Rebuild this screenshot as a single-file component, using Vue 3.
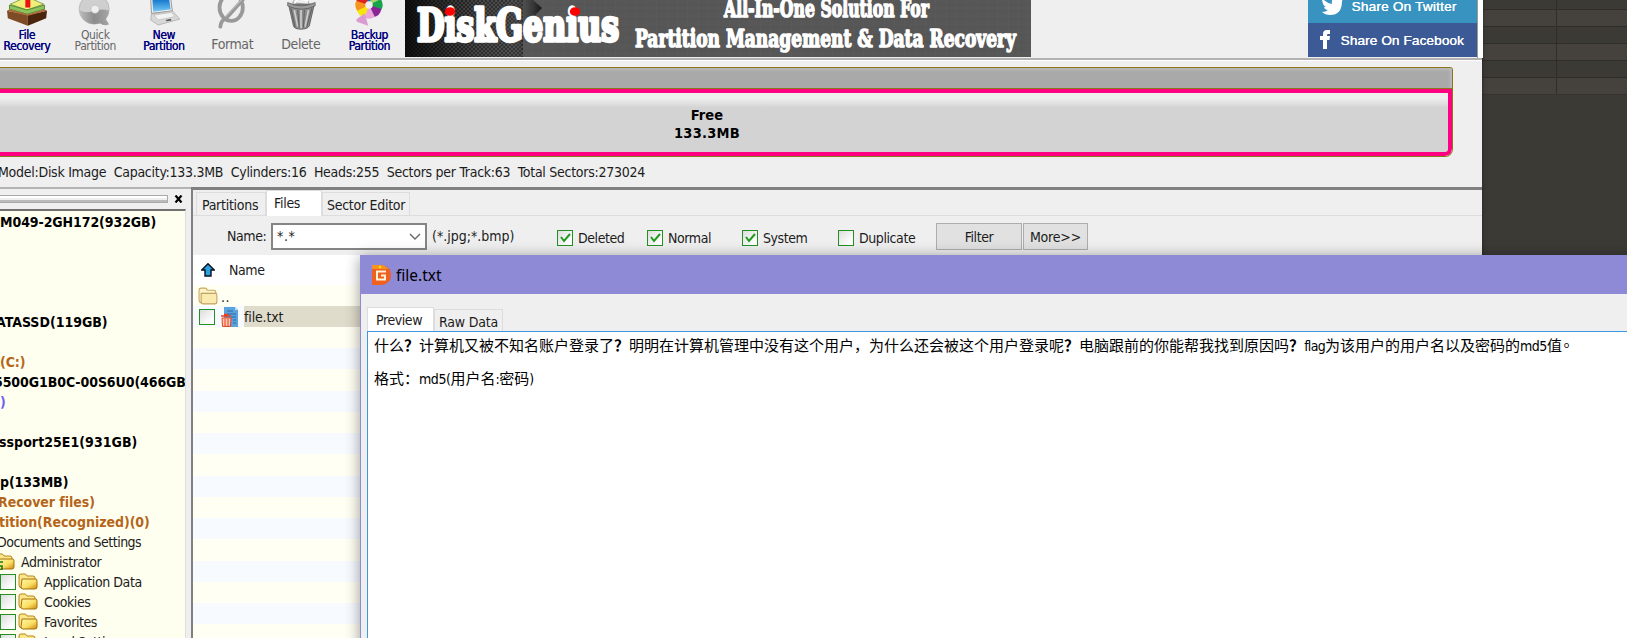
<script setup>
const tools = [
  { id: 'file', lines: ['File', 'Recovery'], on: true },
  { id: 'quick', lines: ['Quick', 'Partition'] },
  { id: 'new', lines: ['New', 'Partition'], on: true },
  { id: 'format', lines: ['Format'] },
  { id: 'delete', lines: ['Delete'] },
  { id: 'backup', lines: ['Backup', 'Partition'], on: true },
]
const tree = [
  { t: 'M049-2GH172(932GB)', k: 'b disk1' }, {}, {}, {}, {},
  { t: 'ATASSD(119GB)', k: 'b disk2' }, {},
  { t: '(C:)', k: 'b orange' },
  { t: '5500G1B0C-00S6U0(466GB', k: 'b disk3' },
  { t: ')', k: 'b blue' }, {},
  { t: 'ssport25E1(931GB)', k: 'b disk4' }, {},
  { t: 'p(133MB)', k: 'b' },
  { t: 'Recover files)', k: 'b orange rec' },
  { t: 'tition(Recognized)(0)', k: 'b orange recog' },
  { t: 'Documents and Settings', k: 'docs' },
  { t: 'Administrator', k: 'admin', folder: true },
  { t: 'Application Data', k: 'leaf', folder: true, box: true },
  { t: 'Cookies', k: 'leaf', folder: true, box: true },
  { t: 'Favorites', k: 'leaf', folder: true, box: true },
  { t: 'Local Settings', k: 'leaf', folder: true, box: true },
]
const checks = [
  { t: 'Deleted', on: true }, { t: 'Normal', on: true },
  { t: 'System', on: true }, { t: 'Duplicate', on: false },
]
const petals = ['#1674c9', '#a7d36b', '#17a34b', '#8b2496', '#e8a6dc', '#f6e60b', '#f7941d', '#d22']
</script>

<template>
  <div class="screen">
    <svg width="0" height="0" class="defs">
      <defs>
        <linearGradient id="gold" x1="0" y1="0" x2="1" y2="1"><stop offset="0" stop-color="#fff6a8" /><stop offset=".55" stop-color="#fbe064" /><stop offset="1" stop-color="#c8860c" /></linearGradient>
        <linearGradient id="lcd" x1="0" y1="0" x2="0" y2="1"><stop offset="0" stop-color="#0a6fc8" /><stop offset="1" stop-color="#74c8f5" /></linearGradient>
        <linearGradient id="disc" x1="0" y1="0" x2="1" y2="0"><stop offset="0" stop-color="#bdbdbd" /><stop offset=".5" stop-color="#8c8c8c" /><stop offset="1" stop-color="#a5a5a5" /></linearGradient>
        <pattern id="mesh" width="4" height="4" patternUnits="userSpaceOnUse"><rect width="4" height="4" fill="#4a4a4a" /><path d="M0 0h2v2H0zM2 2h2v2H2z" fill="#2a2a2a" /></pattern>
        <pattern id="linen" width="31" height="23" patternUnits="userSpaceOnUse"><rect width="31" height="23" fill="#575757" /><path d="M3.5 0v23M14.5 0v23M24.5 0v23" stroke="#5a5a5a" /><path d="M0 4.5h31M0 11.5h31M0 19.5h31" stroke="#545454" /></pattern>
        <linearGradient id="shade"><stop offset="0" stop-color="#000" stop-opacity=".8" /><stop offset=".4" stop-color="#000" stop-opacity=".2" /><stop offset=".75" stop-color="#777" stop-opacity=".1" /><stop offset="1" stop-color="#000" stop-opacity=".75" /></linearGradient>
      </defs>
    </svg>

    <main class="app">
      <header class="toolbar">
        <div class="tools">
          <div v-for="t in tools" :key="t.id" class="tool" :class="[{ on: t.on, one: t.lines.length === 1 }]">
            <svg class="ticon" width="50" height="36" viewBox="0 0 50 36">
              <g v-if="t.id === 'file'">
                <path d="M5 5l20-9 20 9-20 7z" fill="#f0ee78" stroke="#6d9d35" />
                <path d="M4 6v5l21 6 21-6V6l-21 6z" fill="#8cc35b" stroke="#4d7c2c" />
                <path d="M1 13l25 5v13L2 22z" fill="#7d4b25" /><path d="M26 18l23-5-1 9-22 9z" fill="#4a240c" />
                <path d="M1 13l3-2 22 6 20-6 3 2-23 6z" fill="#a96c38" /><path d="M23-1h6v10h-6z" fill="#e11" />
              </g>
              <g v-else-if="t.id === 'quick'">
                <circle cx="24" cy="11" r="18" fill="#cfcfcf" stroke="#b5b5b5" /><path d="M6 12q9 5 19 1 9-3 17 0-1 6-4 10l4 6q-6 3-11-1-21 4-25-16z" fill="url(#disc)" /><circle cx="25" cy="11" r="5" fill="#efefef" stroke="#bbb" />
              </g>
              <g v-else-if="t.id === 'new'">
                <path d="M9-2h24l2 15-25 3z" fill="#eee" stroke="#888" /><path d="M11-2h20l2 13-21 3z" fill="url(#lcd)" />
                <path d="M10 17l25-4 9 10-26 7-9-6z" fill="#d8d8d8" stroke="#999" stroke-width=".7" /><path d="M13 18l21-3 4 5-20 4z" fill="#f3f3f3" stroke="#aaa" stroke-width=".6" /><path d="M27 24l6-1.500 1 2-6 1z" fill="#555" />
              </g>
              <g v-else-if="t.id === 'format'" fill="none" stroke="#999" stroke-linecap="round">
                <ellipse cx="24" cy="9" rx="14" ry="16" stroke-width="4.5" /><path d="M42-5L17 23q-5 1-6 9" stroke-width="4.5" /><path d="M39-3L17 20" stroke="#bbb" stroke-width="1.5" />
              </g>
              <g v-else-if="t.id === 'delete'">
                <path d="M15 3l5-8 13 4 2 7z" fill="#eee" stroke="#999" /><path d="M10 5h31l-6 26q-2 4-10 4t-9-4z" fill="#8c8c8c" stroke="#555" />
                <path d="M17 12l4 20M25 12v22M34 12l-4 20" stroke="#ccc" stroke-width="2" fill="none" /><path d="M13 10l5 23M21 12l2 21M29 12l-1 21M38 10l-6 22" stroke="#555" fill="none" />
                <path d="M9 3q16 8 33 0v4q-16 8-33 0z" fill="#999" stroke="#555" stroke-width=".8" /><path d="M17 4l5-6 12 3" stroke="#fff" stroke-width="2" fill="none" />
              </g>
              <g v-else>
                <path v-for="(c, i) in petals" :key="c" d="M24 2L17-12q7-5 14 0z" :fill="c" :transform="`translate(1 4) rotate(${i * 45} 24 2)`" />
                <circle cx="25" cy="6" r="4.5" fill="#efefef" /><path d="M20 16l-10 7q-1 3 3 4l11 4z" fill="#d99bd1" />
              </g>
            </svg>
            <span v-for="l in t.lines" :key="l" class="tl">{{ l }}</span>
          </div>
        </div>
        <svg class="banner" width="626" height="57" viewBox="0 0 626 57">
          <rect width="626" height="57" fill="url(#linen)" />
          <path d="M0 0h118v57H0z" fill="url(#mesh)" /><path d="M0 0h128l9 8-24 25 5 24H0z" fill="url(#shade)" />
          <g class="slogan">
            <text class="brand" x="12" y="41" textLength="202" lengthAdjust="spacingAndGlyphs">DiskGenius</text>
            <text class="line" x="319" y="17" textLength="205" lengthAdjust="spacingAndGlyphs">All-In-One Solution For</text>
            <text class="line" x="230" y="46.500" textLength="381" lengthAdjust="spacingAndGlyphs">Partition Management &amp; Data Recovery</text>
          </g>
          <ellipse cx="45" cy="11.5" rx="5.2" ry="4.3" fill="#f00" /><ellipse cx="170" cy="11.5" rx="5.2" ry="4.3" fill="#f00" />
        </svg>
        <div class="share">
          <div class="tw"><svg width="22" height="24" viewBox="0 0 22 24"><path d="M1-2q4 5 10 6Q10-3 16-4q3 0 4 2l3-1-2 4q0 14-12 14-5 0-8-3 4 0 6-2-3 0-4-3h2Q1 5 1-2z" fill="#fff" /></svg><span>Share On Twitter</span></div>
          <div class="fb"><svg width="12" height="20" viewBox="0 0 12 20"><path d="M3 19v-9H0V6h3V4q0-4 4-4h3v4H8Q7 4 7 5v1h3l-.5 4H7v9z" fill="#fff" /></svg><span>Share On Facebook</span></div>
        </div>
      </header>

      <section class="disk">
        <div class="bar">
          <div class="strip"></div>
          <div class="free"><b>Free</b><b class="size">133.3MB</b></div>
        </div>
        <p class="info">Model:Disk Image&nbsp; Capacity:133.3MB&nbsp; Cylinders:16&nbsp; Heads:255&nbsp; Sectors per Track:63&nbsp; Total Sectors:273024</p>
      </section>

      <section class="body">
        <aside class="side">
          <div class="grip"><i></i><svg width="10" height="8" viewBox="0 0 10 8"><path d="M1.5.5l6 7M7.5.5l-6 7" stroke="#000" stroke-width="2.2" /></svg></div>
          <div class="tree">
            <div v-for="(r, i) in tree" :key="i" class="node" :class="r.k">
              <i v-if="r.box" class="box"></i>
              <svg v-if="r.folder" class="folder" width="20" height="17" viewBox="0 0 20 17"><path d="M1 3q0-2 2-2h4q1 0 2 2h6q2 0 2 2v10H4q-3 0-3-3z" fill="#fbe88a" stroke="#b98216" /><path d="M4 6h14q1 0 1 2v6q0 2-2 2H5q-2 0-2-2z" fill="url(#gold)" stroke="#a87010" /><path v-if="!r.box" d="M4 9h4M5 13h2v4H5" fill="none" stroke="#1d7a1d" stroke-width="1.6" /></svg>
              <span>{{ r.t }}</span>
            </div>
          </div>
        </aside>

        <section class="pane">
          <nav class="tabs"><span class="t1">Partitions</span><span class="t2 cur">Files</span><span class="t3">Sector Editor</span></nav>
          <div class="filter">
            <label>Name:</label>
            <div class="combo"><span>*.*</span><svg width="12" height="8" viewBox="0 0 12 8"><path d="M1 1l5 5 5-5" fill="none" stroke="#666" stroke-width="1.4" /></svg></div>
            <span class="hint">(*.jpg;*.bmp)</span>
            <div class="checks">
              <span v-for="c in checks" :key="c.t" class="check" :class="c.t"><i class="box"><svg v-if="c.on" width="12" height="12" viewBox="0 0 12 12"><path d="M2 5l3 4 6-7" fill="none" stroke="#1d9a1d" stroke-width="2" /></svg></i>{{ c.t }}</span>
            </div>
            <button class="go">Filter</button><button class="more">More&gt;&gt;</button>
          </div>
          <div class="list">
            <div class="head"><svg width="14" height="14" viewBox="0 0 14 14"><path d="M7 .7L13.3 7H10v6H4V7H.7z" fill="#2b9fe0" stroke="#08121c" stroke-width="1.4" /></svg><span>Name</span></div>
            <div class="row up"><svg class="folder" width="21" height="18" viewBox="0 0 20 17"><path d="M1 3q0-2 2-2h4q1 0 2 2h6q2 0 2 2v10H4q-3 0-3-3z" fill="#fdf2c8" stroke="#c8a860" /><path d="M3 6h14q1 0 1 2v6q0 2-2 2H5q-2 0-2-2z" fill="#fbeab0" stroke="#bfa262" /></svg><span>..</span></div>
            <div class="row file"><i class="box"></i>
              <svg width="18" height="20" viewBox="0 0 18 20"><path d="M3 0h11l3 3v17H3z" fill="#5ba2da" /><path d="M14 0v3h3z" fill="#b9dcf5" /><path d="M6 4h6M6 7h9M10 10h5M12 13h3M12 16h3" stroke="#2a6dab" /><path d="M0 9h10M3 7.5h4" stroke="#e8401c" stroke-width="1.5" /><path d="M1 11h9l-.5 8.4h-8z" fill="#ffc9b8" stroke="#e8401c" /><path d="M4 12v7M7 12v7" stroke="#e8401c" /></svg>
              <span class="sel">file.txt</span></div>
            <div class="stripes"></div>
          </div>
        </section>
      </section>
    </main>

    <section class="dialog">
      <header class="title">
        <svg width="19" height="20" viewBox="0 0 19 20"><path d="M0 0h10q9 2 9 10t-9 10H0z" fill="#f0601e" /><path d="M0 0h10q4 1 6 4H0z" fill="#f7931e" /><path d="M14 6.5H5v8h8v-4H9" fill="none" stroke="#fff3d8" stroke-width="2" /><circle cx="8" cy="2" r="1.2" fill="#ffe600" /></svg>
        <span>file.txt</span>
      </header>
      <nav class="dtabs"><span class="cur">Preview</span><span class="raw">Raw Data</span></nav>
      <article class="text">
        <p>什么<b>？</b>计算机又被不知名账户登录了<b>？</b>明明在计算机管理中没有这个用户，为什么还会被这个用户登录呢<b>？</b>电脑跟前的你能帮我找到原因吗<b>？</b><span class="lat flag">flag</span>为该用户的用户名以及密码的<span class="lat md">md5</span>值<span class="stop">。</span></p>
        <p>格式：<span class="lat md">md5(</span>用户名<span class="lat">:</span>密码<span class="lat">)</span></p>
      </article>
    </section>
  </div>
</template>

<style>
html, body { margin: 0; overflow: hidden; }
</style>

<style scoped>
* { box-sizing: border-box; }
p { margin: 0; }
.screen { position: relative; width: 1627px; height: 638px; overflow: hidden; color: #1c1c1c; font: 14px "DejaVu Sans Condensed", "DejaVu Sans", sans-serif; font-stretch: condensed; letter-spacing: -.42px; white-space: nowrap;
  background: linear-gradient(90deg, transparent 1556px, #2f2d2a 1556px 1557px, transparent 1557px) 0 0 / 100% 94px no-repeat, repeating-linear-gradient(#3c3a35 0 9px, #2f2d2a 9px 10px, #45413c 10px 26px, #2f2d2a 26px 27px, #3c3a35 27px 34px) 0 0 / 100% 94.5px no-repeat, #3c3a35; }
.defs { position: absolute; }
.app { width: 1482px; height: 638px; background: #efefef; display: flex; flex-direction: column; box-shadow: 0 0 4px #222; }

.toolbar { height: 61px; flex: none; display: flex; border-bottom: 1px solid #fff; box-shadow: inset 0 -2px #b2b2b2; }
.tools { display: flex; width: 404px; margin-left: -7.5px; }
.tool { width: 68.5px; flex: none; display: flex; flex-direction: column; align-items: center; color: #666; font-size: 12px; line-height: 11px; letter-spacing: -.4px; }
.tool.on { color: #00007e; text-shadow: .3px 0 #00007e; }
.ticon { height: 30px; flex: none; overflow: visible; }
.one .tl { font-size: 14px; line-height: 29px; letter-spacing: -.4px; }
.banner { margin-left: 8px; flex: none; }
.slogan { fill: #fff; stroke: #fff; stroke-linejoin: round; font-family: "DejaVu Serif Condensed", "DejaVu Serif", serif; font-weight: bold; letter-spacing: 0; }
.brand { font-size: 45px; stroke-width: 3.4px; }
.line { font-size: 25px; stroke-width: 1.5px; }
.share { width: 170px; margin-left: 277px; height: 58px; border-right: 1px solid #999; box-shadow: 5px 0 #fff; font: 13.6px "Liberation Sans", sans-serif; letter-spacing: .1px; color: #fff; text-shadow: .3px 0 #fff; }
.share div { display: flex; }
.tw { height: 23px; background: #3893c0; padding-left: 13px; }
.tw span { line-height: 13px; margin-left: 9px; letter-spacing: .2px; }
.fb { height: 34px; background: #3b5a96; padding-left: 12px; align-items: center; }
.fb span { margin-left: 9px; padding-top: 1px; }

.disk { height: 126px; flex: none; padding-top: 6px; }
.bar { width: 1453px; border: solid #8b7718; border-width: 1px 1px 1px 0; border-radius: 0 3px 8px 0; height: 90px; overflow: hidden; }
.strip { height: 21px; background: #a8a8a8; box-shadow: inset -2px 2px 3px #bbb; border-bottom: 1px solid #8b7718; }
.free { height: 67px; border: 4px solid #ff0080; border-left: 0; border-radius: 0 0 7px 0; background: linear-gradient(#eee 0 5px, #d3d3d3 15px); display: flex; flex-direction: column; align-items: center; padding: 14px 0 0 0; line-height: 17.5px; font-size: 14.5px; letter-spacing: .1px; color: #000; }
.free b { transform: translateX(-17px); }
.size { letter-spacing: .25px; }
.info { margin-left: -2px; line-height: 31px; letter-spacing: -.27px; }

.body { flex: 1; display: flex; min-height: 0; }
.side { width: 191px; flex: none; border-top: 2px solid #b4b4b4; }
.grip { height: 20px; display: flex; align-items: center; gap: 6px; }
.grip i { width: 168px; height: 8px; border: 1px solid #aaa; border-left: 0; box-shadow: inset 0 2px #fff, inset 0 -2px #bbb; }
.tree { width: 186px; height: 429px; padding-top: .6px; border-top: 2px solid #707070; border-right: 1px solid #ddd; background: #ffffef; overflow: hidden; }
.node { height: 20px; display: flex; align-items: center; }
.b { font-weight: bold; color: #000; letter-spacing: -.08px; }
.disk2 { margin-left: -4px; letter-spacing: 0; }
.disk3 { margin-left: -6px; }
.disk4 { margin-left: -1px; letter-spacing: .05px; }
.rec { margin-left: -2px; letter-spacing: -.05px; }
.recog { margin-left: -1px; letter-spacing: -.04px; }
.orange { color: #b5651a; }
.blue { color: #6b62f5; }
.admin { margin-left: -5px; }
.admin span { margin-left: 6px; }
.leaf span { margin-left: 6px; }
.docs { margin-left: -3px; letter-spacing: -.5px; }
.node .box + .folder { margin-left: 2px; }
.box { width: 16px; height: 16px; flex: none; border: 1.5px solid #249024; background: linear-gradient(135deg, #dcdcdc, #fff 80%); display: inline-flex; align-items: center; justify-content: center; }

.pane { flex: 1; border: solid #808080; border-width: 3px 0 0 2px; display: flex; flex-direction: column; }
.tabs { height: 26px; display: flex; align-items: flex-end; padding-left: 3px; border-bottom: 1px solid #ddd; letter-spacing: -.28px; }
.tabs span { height: 23px; border: 1px solid #ddd; border-bottom: 0; line-height: 24px; padding-left: 5px; }
.t1 { width: 70px; }
.tabs .cur { width: 56px; height: 26px; background: #fff; line-height: 24px; padding-left: 7px; margin-bottom: -1px; }
.tabs .t3 { width: 88px; padding-left: 4px; }
.filter { height: 39px; display: flex; align-items: flex-start; padding: 7px 0 0 34px; line-height: 27px; }
.filter label { width: 44px; flex: none; }
.combo { width: 156px; height: 27px; flex: none; border: 2px solid #858585; background: #fff; display: flex; justify-content: space-between; align-items: center; padding: 0 4px; line-height: 18px; letter-spacing: .6px; }
.combo span { padding-bottom: 2px; }
.hint { width: 130px; flex: none; padding-left: 5px; letter-spacing: 0; }
.checks { display: flex; width: 379px; flex: none; }
.check { display: flex; align-items: center; gap: 5px; height: 30px; flex: none; }
.Deleted { width: 90px; }
.Normal { width: 95px; }
.System { width: 96px; }
button { font: inherit; letter-spacing: inherit; color: inherit; height: 27px; margin: 0; padding: 0; border: 1.5px solid #adadad; background: #e1e1e1; line-height: 24px; }
.go { width: 86px; }
.more { width: 65px; margin-left: 1px; letter-spacing: -.2px; }
.list { flex: 1; background: #fffff4; }
.head { height: 30px; background: #fff; display: flex; align-items: center; padding-left: 8px; gap: 14px; }
.row { height: 21px; display: flex; align-items: center; background: #fffff4; padding-left: 5px; }
.up span { margin-left: 2px; padding-top: 2px; letter-spacing: .5px; }
.file { background: #f7fbff; gap: 6px; padding-left: 6px; }
.file .sel { margin-left: -1px; }
.sel { flex: 1; background: #e0dccc; line-height: 22px; height: 21px; letter-spacing: -.15px; }
.stripes { height: 311px; background: repeating-linear-gradient(#fffff4 0 21.2px, #f7fbff 21.2px 42.5px); }

.dialog { position: absolute; left: 360px; top: 255px; width: 1280px; height: 400px; background: #efefef; border-left: 1px solid #8e8ad6; box-shadow: 0 2px 14px rgba(0, 0, 0, .4); display: flex; flex-direction: column; }
.title { height: 39px; flex: none; background: #8e8ad6; display: flex; align-items: center; padding-left: 11px; gap: 5px; color: #000; font: 15.5px "Noto Sans", sans-serif; letter-spacing: 0; }
.dtabs { height: 37px; flex: none; display: flex; align-items: flex-end; padding-left: 6px; }
.dtabs span { border: 1px solid #dcdcdc; border-bottom: 0; padding-left: 8px; width: 67px; height: 24px; line-height: 24px; background: #fff; }
.dtabs .raw { width: 69px; height: 22px; background: none; padding-left: 4px; letter-spacing: -.2px; }
.text { flex: 1; margin-left: 6px; border: solid #3f97e0; border-width: 1.5px 0 0 1.5px; background: #fff; padding: 0 0 0 6px; color: #000; font: 15px "Noto Sans CJK SC", sans-serif; letter-spacing: 0; }
.text p { height: 32.5px; line-height: 25px; }
.lat { font: 14px "DejaVu Sans Condensed", sans-serif; font-stretch: condensed; letter-spacing: -.45px; }
.flag { letter-spacing: -.7px; }
.stop { font-family: "Noto Sans CJK TC", sans-serif; margin-left: -3px; }
</style>
